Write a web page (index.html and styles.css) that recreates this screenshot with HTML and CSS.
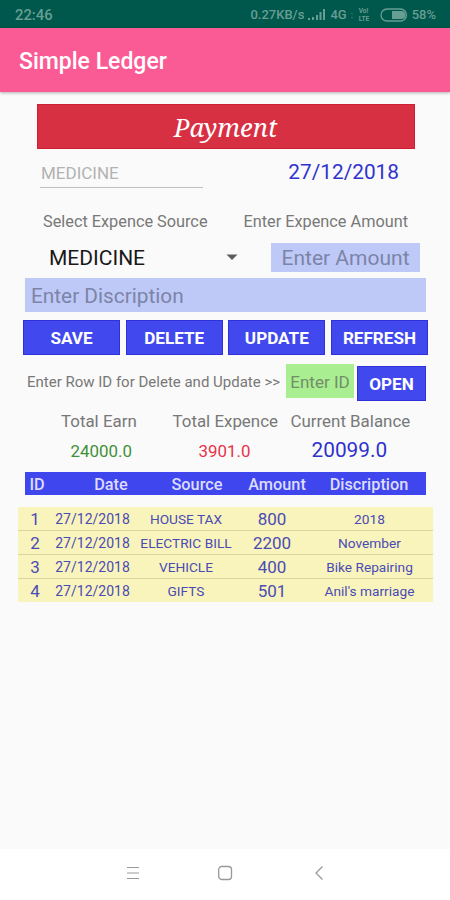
FILE: index.html
```html
<!DOCTYPE html>
<html lang="en">
<head>
<meta charset="utf-8">
<title>Simple Ledger</title>
<link rel="stylesheet" href="styles.css">
</head>
<body>
<div class="status">
  <span class="clock">22:46</span>
  <span class="rate">0.27KB/s</span>
  <svg class="signal" width="18" height="13" viewBox="0 0 18 13"><path d="M0 12h2v-2H0zM4 12h2V9H4zM8 12h2V7H8zM11.500 12h2V4h-2zM15 12h2V1h-2z" fill="currentColor"/></svg>
  <span class="net">4G</span>
  <span class="dots">:</span>
  <span class="volte"><span>Vo!</span><span>LTE</span></span>
  <svg class="battery" width="28" height="14" viewBox="0 0 28 14"><rect x="1" y="1" width="25.500" height="12" rx="6" fill="none" stroke="currentColor" stroke-width="1.300"/><path d="M12 3h9.500a4 4 0 0 1 0 8H12z" fill="currentColor"/></svg>
  <span class="pct">58%</span>
</div>
<header class="appbar"><h1>Simple Ledger</h1></header>
<main>
  <div class="banner">Payment</div>
  <div class="top-row">
    <div class="category">MEDICINE</div>
    <div class="date">27/12/2018</div>
  </div>
  <div class="labels">
    <span class="label-source">Select Expence Source</span>
    <span class="label-amount">Enter Expence Amount</span>
  </div>
  <div class="pick-row">
    <div class="spinner">MEDICINE</div>
    <svg class="caret" width="12" height="6" viewBox="0 0 12 6"><path d="M0.500 0.500h11L6 6z" fill="#5c5c5c"/></svg>
    <div class="amount">Enter Amount</div>
  </div>
  <div class="description">Enter Discription</div>
  <div class="buttons">
    <button>SAVE</button><button>DELETE</button><button>UPDATE</button><button>REFRESH</button>
  </div>
  <div class="id-row">
    <span class="hint">Enter Row ID for Delete and Update &gt;&gt;</span>
    <div class="id-field">Enter ID</div>
    <button class="open">OPEN</button>
  </div>
  <div class="totals">
    <div class="total earn"><span>Total Earn</span><b>24000.0</b></div>
    <div class="total expence"><span>Total Expence</span><b>3901.0</b></div>
    <div class="total balance"><span>Current Balance</span><b>20099.0</b></div>
  </div>
  <div class="thead"><span>ID</span><span>Date</span><span>Source</span><span>Amount</span><span>Discription</span></div>
  <div class="list">
    <div class="entry"><span class="num">1</span><span class="day">27/12/2018</span><span>HOUSE TAX</span><span class="num">800</span><span>2018</span></div>
    <div class="entry"><span class="num">2</span><span class="day">27/12/2018</span><span>ELECTRIC BILL</span><span class="num">2200</span><span>November</span></div>
    <div class="entry"><span class="num">3</span><span class="day">27/12/2018</span><span>VEHICLE</span><span class="num">400</span><span class="note">Bike Repairing</span></div>
    <div class="entry"><span class="num">4</span><span class="day">27/12/2018</span><span>GIFTS</span><span class="num">501</span><span class="note">Anil's marriage</span></div>
  </div>
</main>
<nav>
  <svg width="14" height="14" viewBox="0 0 14 14"><path d="M1 1.500h12M1 7h12M1 12.500h12" stroke="#999" stroke-width="1.200"/></svg>
  <svg width="16" height="16" viewBox="0 0 16 16"><rect x="1.700" y="1.500" width="12.800" height="13" rx="3" fill="none" stroke="#999" stroke-width="1.300"/></svg>
  <svg width="10" height="16" viewBox="0 0 10 16"><path d="M8.500 1.500L2 8l6.500 6.500" fill="none" stroke="#999" stroke-width="1.300"/></svg>
</nav>
</body>
</html>
```
FILE: styles.css
```css
* { box-sizing: border-box; }
body {
  margin: 0;
  width: 450px;
  height: 900px;
  display: flex;
  flex-direction: column;
  overflow: hidden;
  background: #fafafa;
  font-family: Roboto, "Liberation Sans", sans-serif;
  color: #787878;
  white-space: nowrap;
}
.status {
  height: 27.5px;
  flex: none;
  display: flex;
  align-items: center;
  padding: 2px 14px 0 15px;
  background: #00574b;
  color: #679e94;
  font-size: 13px;
  font-weight: 500;
}
.clock { font-size: 14.8px; }
.rate { margin-left: auto; }
.signal { margin-left: 4px; }
.net { margin-left: 4px; }
.dots { margin-left: 4px; width: 5px; font-size: 9px; opacity: .7; }
.volte { display: flex; flex-direction: column; width: 16px; margin-left: 3px; font-size: 6.5px; line-height: 8px; font-weight: 700; }
.battery { margin: 0 4px 0 5px; }
.appbar {
  height: 64.5px;
  flex: none;
  display: flex;
  align-items: center;
  padding: 3px 0 0 19px;
  background: #fb5b94;
  box-shadow: 0 1px 3px rgba(0, 0, 0, .3);
}
h1 { margin: 0; color: #fff; font-size: 23px; font-weight: 500; }
main { flex: 1; }
.banner {
  width: 378px;
  height: 45px;
  margin: 12px 0 0 36.5px;
  background: #d83043;
  border: 1px solid #cf1f33;
  color: #fff;
  font: italic 25.5px/44px "Noto Serif", "DejaVu Serif Condensed", "DejaVu Serif", serif;
  text-align: center;
}
.top-row { display: flex; height: 39px; padding: 0 51px 0 40px; justify-content: space-between; }
.category {
  width: 163px;
  height: 39px;
  border-bottom: 1px solid #c0c0c0;
  padding: 0 0 0 1px;
  line-height: 48px;
  font-size: 17px;
  color: #b2b2b2;
}
.date { line-height: 46px; font-size: 20.8px; color: #3232cf; }
.labels {
  display: flex;
  justify-content: space-between;
  padding: 0 42px 0 43px;
  height: 55px;
  line-height: 67px;
  font-size: 16.3px;
}
.pick-row { display: flex; align-items: center; height: 28.5px; padding: 0 30px 0 49px; }
.spinner { flex: 1; padding-top: 1px; font-size: 21px; color: #181818; }
.caret { margin-right: 33px; }
.amount { width: 149px; height: 28.5px; background: #bec9f7; color: #7c84a8; font-size: 21px; line-height: 30px; text-align: center; }
.description { margin: 6px 24px 0 25px; height: 34px; padding-left: 6px; background: #bec9f7; color: #7c84a8; font-size: 20.8px; line-height: 36px; }
.buttons { display: grid; grid-template-columns: repeat(4, 1fr); gap: 5.5px; margin: 8.5px 22px 0 23px; }
button {
  height: 35px;
  padding: 1px 0 0;
  border: 1px solid #3030dc;
  background: #4048ee;
  color: #fff;
  font: 700 17.1px Roboto, "Liberation Sans", sans-serif;
}
.id-row { display: flex; height: 45px; padding: 8.5px 24px 0 27px; align-items: flex-start; }
.hint { flex: 1; font-size: 15px; line-height: 37px; }
.id-field { width: 68px; height: 34px; margin-right: 3px; background: #a9ef91; color: #718e69; font-size: 17px; line-height: 36px; text-align: center; }
.open { width: 69px; height: 35px; margin-top: 2px; }
.totals { display: grid; grid-template-columns: 111.5px 118px 122px; height: 72px; padding: 10px 0 0 61px; }
.total { display: flex; flex-direction: column; align-items: flex-start; font-size: 16.9px; line-height: 22px; }
.total b { font-weight: 400; line-height: 38px; }
.earn b { color: #3f9138; margin-left: 9.5px; }
.expence b { color: #e5334b; margin-left: 26px; }
.balance b { font-size: 20.8px; line-height: 36px; color: #3030cf; margin-left: 21px; }
.thead {
  display: grid;
  grid-template-columns: 24px 124px 48px 112px 72px;
  margin: 0 24px 0 25px;
  height: 22.5px;
  background: #4046ee;
  color: #dcdcff;
  font-size: 16.3px;
  font-weight: 500;
  line-height: 25px;
  text-align: center;
}
.thead span { display: flex; justify-content: center; }
.list { margin: 12px 17px 0 18px; background: #f8f4bb; }
.entry {
  display: grid;
  grid-template-columns: 34px 82px 104px 68px 127px;
  height: 24px;
  border-bottom: 1px solid #d9d5a4;
  color: #4b4bb5;
  font-size: 13.7px;
  line-height: 24px;
  text-align: center;
}
.entry:last-child { border: 0; height: 23px; }
.day { font-size: 14px; margin-left: -1px; }
.num { font-size: 17px; }
nav { height: 51px; flex: none; display: grid; grid-template-columns: 91px 97px 10px; align-items: center; padding: 0 0 3px 126px; background: #fff; }
```
